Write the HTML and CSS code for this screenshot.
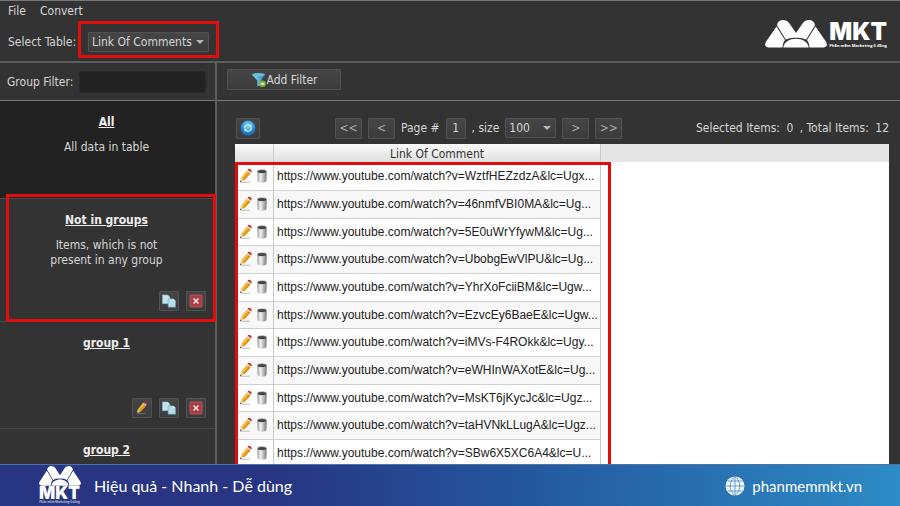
FILE: index.html
```html
<!DOCTYPE html>
<html lang="en">
<head>
<meta charset="utf-8">
<meta name="viewport" content="width=device-width, initial-scale=1">
<title>Link Of Comments</title>
<link rel="stylesheet" href="styles.css">
</head>
<body>
<svg class="defs" aria-hidden="true">
  <defs>
    <linearGradient id="can" x1="0" x2="1"><stop offset="0" stop-color="#9a9a9a"/><stop offset=".35" stop-color="#f2f2f2"/><stop offset="1" stop-color="#777"/></linearGradient>
    <linearGradient id="funnel" x1="0" x2="1"><stop offset="0" stop-color="#9bdcf8"/><stop offset="1" stop-color="#2787be"/></linearGradient>
    <radialGradient id="ball" cy=".35"><stop offset="0" stop-color="#8fd6fb"/><stop offset=".6" stop-color="#43aaea"/><stop offset="1" stop-color="#1d74bd"/></radialGradient>
    <symbol id="pencil" viewBox="0 0 14 16">
      <path d="M1.500 14.300h9.500" stroke="#999" stroke-opacity=".45" stroke-width="1.400"/>
      <path d="M1 14.300l1-4.300L5.200 12.300z" fill="#e8c9a0"/>
      <path d="M1 14.300l.4-1.800 1.200 1z" fill="#333"/>
      <path d="M2 10L7.700 2.700l3.800 2.700L5.200 12.300z" fill="#f6b93a"/>
      <path d="M3.800 11.200L9.700 4l1.800 1.400L5.200 12.300z" fill="#dc951d"/>
      <path d="M7.700 2.700l.8-1 3.800 2.700-.8 1z" fill="#ddd"/>
      <path d="M8.500 1.700C9.200.6 10.300.5 11.500 1.300s1.500 2 .8 3.100z" fill="#c5322b"/>
    </symbol>
    <symbol id="trash" viewBox="0 0 12 16">
      <path d="M1.200 3.500l.4 9.500c.2 2.200 8.600 2.200 8.800 0l.4-9.500z" fill="url(#can)"/>
      <ellipse cx="6" cy="3.300" rx="4.900" ry="2" fill="#b0b0b0"/>
      <ellipse cx="6" cy="3.500" rx="4.200" ry="1.500" fill="#444"/>
    </symbol>
    <symbol id="copy" viewBox="0 0 16 16">
      <path d="M.5 1h6L9 3.500V11H.5z" fill="#c3e4ee" stroke="#85b8cb" stroke-width=".6"/>
      <path d="M7 5.500h5.500L15.500 8v7H7z" fill="#b5deeb" stroke="#5d9db6" stroke-width=".6"/>
      <path d="M12.500 5.500V8h3z" fill="#f2fbff"/>
    </symbol>
    <symbol id="remove" viewBox="0 0 14 14">
      <rect x="1" y="1" width="12" height="12" rx="1" fill="#a93c42" stroke="#c75c60" stroke-width=".8"/>
      <path d="M4.500 4.500l5 5m0-5l-5 5" stroke="#f0dede" stroke-width="1.700"/>
    </symbol>
    <symbol id="filter" viewBox="0 0 16 16">
      <path d="M1 2.500L6.300 8.500v6l3.700-1.600V8.500L14 2.500z" fill="url(#funnel)"/>
      <ellipse cx="7.500" cy="2.600" rx="6.500" ry="1.700" fill="#6cbde3"/>
      <circle cx="11.500" cy="11.800" r="3.300" fill="#77b932"/>
      <path d="M9.700 11.800h3.600" stroke="#fff" stroke-width="1.400"/>
    </symbol>
    <symbol id="refresh" viewBox="0 0 16 16">
      <circle cx="8" cy="8" r="7.500" fill="url(#ball)"/>
      <path d="M4.600 8.300A3.400 3.400 0 0 1 10.400 5.700M11.400 7.700A3.400 3.400 0 0 1 5.600 10.300" fill="none" stroke="#c6ebff" stroke-width="1.300"/>
      <path d="M11.600 4.300v2.900H8.700zM4.400 11.700V8.800h2.900z" fill="#c6ebff"/>
    </symbol>
    <symbol id="globe" viewBox="0 0 20 20">
      <circle cx="10" cy="10" r="9.500" fill="#f4faff"/>
      <path d="M10 .5v19M.5 10h19M2.500 5h15M2.500 15h15M10 .5C3.500 6 3.500 14 10 19.500C16.500 14 16.500 6 10 .5" fill="none" stroke="#4588bd" stroke-width=".8"/>
    </symbol>
    <symbol id="flower" viewBox="0 0 62 28" preserveAspectRatio="none">
      <g fill="#fff">
        <path d="M11.500 6.500L20 20Q17.600 22.800 17.300 27.500H4Q-1.500 27 .8 22z"/>
        <path d="M12 5.200C13-1 21-1.500 24.500 3.500L31 13V17.700Q25 17.300 20.800 19.600z"/>
        <path d="M50.500 6.500L42 20Q44.400 22.800 44.700 27.500H58Q63.500 27 61.200 22z"/>
        <path d="M50 5.200C49-1 41-1.500 37.500 3.500L31 13V17.700Q37 17.300 41.200 19.600z"/>
        <path d="M18.300 27.500C19.500 15.800 42.500 15.800 43.700 27.500z"/>
      </g>
    </symbol>
  </defs>
</svg>
<div class="app">
  <nav class="menu" aria-label="Main"><a href="#">File</a><a href="#">Convert</a></nav>
  <header class="toolbar">
    <label for="table">Select Table:</label>
    <span class="picker table-picker"><select id="table"><option>Link Of Comments</option></select></span>
    <div class="brand">
      <svg class="brand-mark" aria-hidden="true"><use href="#flower"/></svg>
      <div class="brand-words"><strong>MKT</strong><small>Phần mềm Marketing 0 đồng</small></div>
    </div>
  </header>
  <div class="workspace">
    <aside class="sidebar">
      <div class="group-filter"><label for="gf">Group Filter:</label><input id="gf" type="text"></div>
      <section class="group all"><h2>All</h2><p>All data in table</p></section>
      <section class="group loose"><h2>Not in groups</h2><p>Items, which is not present in any group</p>
        <div class="actions">
          <button aria-label="Copy"><svg><use href="#copy"/></svg></button>
          <button aria-label="Delete"><svg><use href="#remove"/></svg></button>
        </div>
      </section>
      <section class="group named"><h2>group 1</h2>
        <div class="actions">
          <button aria-label="Edit"><svg><use href="#pencil"/></svg></button>
          <button aria-label="Copy"><svg><use href="#copy"/></svg></button>
          <button aria-label="Delete"><svg><use href="#remove"/></svg></button>
        </div>
      </section>
      <section class="group named"><h2>group 2</h2></section>
    </aside>
    <main class="content">
      <div class="filters"><button class="add"><svg aria-hidden="true"><use href="#filter"/></svg>Add Filter</button></div>
      <div class="pager">
        <button class="refresh" aria-label="Refresh"><svg><use href="#refresh"/></svg></button>
        <div class="pages">
          <button>&lt;&lt;</button><button>&lt;</button>
          <label for="page">Page #</label><input id="page" type="text" value="1">
          <label for="size">, size</label><span class="picker size-picker"><select id="size"><option>100</option></select></span>
          <button>&gt;</button><button>&gt;&gt;</button>
        </div>
        <div class="counts">Selected Items: <span>0</span> , Total Items: <span>12</span></div>
      </div>
      <div class="sheet">
        <table>
          <thead><tr><th class="tools"></th><th class="link">Link Of Comment</th></tr></thead>
          <tbody id="rows"></tbody>
        </table>
      </div>
    </main>
  </div>
  <footer class="banner">
    <div class="stamp"><svg aria-hidden="true"><use href="#flower"/></svg><strong>MKT</strong><small>Phần mềm Marketing 0 đồng</small></div>
    <p class="slogan">Hiệu quả - Nhanh - Dễ dùng</p>
    <a class="site" href="#"><svg aria-hidden="true"><use href="#globe"/></svg>phanmemmkt.vn</a>
  </footer>
</div>
<script src="rows.js"></script>
</body>
</html>
```
FILE: rows.js
```js
const links = [
  "WztfHEZzdzA&lc=Ugx...",
  "46nmfVBI0MA&lc=Ug...",
  "5E0uWrYfywM&lc=Ug...",
  "UbobgEwVlPU&lc=Ug...",
  "YhrXoFciiBM&lc=Ugw...",
  "EzvcEy6BaeE&lc=Ugw...",
  "iMVs-F4ROkk&lc=Ugy...",
  "eWHInWAXotE&lc=Ug...",
  "MsKT6jKycJc&lc=Ugz...",
  "taHVNkLLugA&lc=Ugz...",
  "SBw6X5XC6A4&lc=U..."
];
const body = document.getElementById("rows");
for (const link of links) {
  const row = body.insertRow();
  const tools = row.insertCell();
  tools.className = "tools";
  tools.innerHTML = '<div class="row-tools"><button aria-label="Edit"><svg><use href="#pencil"/></svg></button><button aria-label="Delete"><svg><use href="#trash"/></svg></button></div>';
  row.insertCell().textContent = "https://www.youtube.com/watch?v=" + link;
}
```
FILE: styles.css
```css
*, *::before, *::after { box-sizing: border-box; }
body { margin: 0; background: #333; color: #d6d6d6; font: 12px/16px "DejaVu Sans Condensed", "DejaVu Sans", sans-serif; }
button, input, select { font: inherit; color: inherit; margin: 0; padding: 0; }
a { color: inherit; text-decoration: none; }
h2, p { margin: 0; }
.defs { position: absolute; width: 0; height: 0; }
.app { display: flex; flex-direction: column; height: 100vh; overflow: hidden; }

.menu { display: flex; gap: 14px; padding: 2px 8px 0; height: 22px; border-top: 1px solid #777; }
.toolbar { position: relative; display: flex; align-items: center; gap: 10px; height: 41px; padding-left: 8px; border-bottom: 2px solid #5c5c5c; }
.toolbar label { width: 70px; white-space: nowrap; }
.picker { position: relative; display: flex; }
.picker::after { content: ""; position: absolute; right: 5px; top: 8px; border: 4px solid transparent; border-top-color: #b5b5b5; border-bottom: 0; pointer-events: none; }
.picker select, .pages button, .pages input, .refresh, .add, .actions button {
  appearance: none; border: 1px solid #525252; background: linear-gradient(#454545, #3c3c3c); border-radius: 1px; outline: 0;
}
.picker select { width: 100%; height: 20px; padding-left: 3px; }
.table-picker { width: 121px; }
.table-picker::before { content: ""; position: absolute; inset: -11px -10px -6px -10px; border: 3px solid #e30c0c; pointer-events: none; }
.brand { position: absolute; right: 13px; bottom: 12px; display: flex; align-items: flex-end; gap: 2px; color: #fff; }
.brand-mark { width: 62px; height: 28px; margin-bottom: 1px; }
.brand-words { display: flex; flex-direction: column; }
.brand strong { font: 900 24px/22px Inter, sans-serif; }
.brand small { font: 700 4px/6px "Open Sans", sans-serif; white-space: nowrap; }

.workspace { flex: 1; min-height: 0; display: flex; overflow: hidden; }
.sidebar { flex: 0 0 217px; min-width: 0; border-right: 2px solid #5c5c5c; }
.group-filter { display: flex; align-items: center; gap: 6px; height: 38px; padding: 0 9px 0 7px; border-bottom: 1px solid #777; }
.group-filter label { white-space: nowrap; }
.group-filter input { flex: 1; min-width: 0; height: 22px; background: #222; border: 1px solid #2a2a2a; border-radius: 3px; }
.group { position: relative; display: flex; flex-direction: column; align-items: center; text-align: center; padding: 13px 45px 0 43px; border-bottom: 1px solid #484848; }
.group h2 { font-size: 12px; line-height: 16px; font-weight: 700; text-decoration: underline; color: #eee; }
.group p { margin-top: 10px; line-height: 15px; }
.all { height: 98px; background: #222; }
.loose { height: 123px; }
.loose::after { content: ""; position: absolute; inset: -5px -1px -1px 6px; border: 3px solid #e30c0c; z-index: 1; pointer-events: none; }
.named { height: 107px; }
.actions { position: absolute; right: 9px; bottom: 10px; display: flex; gap: 7px; }
.actions button { display: grid; place-items: center; width: 20px; height: 20px; }
.actions svg { width: 14px; height: 14px; }

.content { flex: 1; min-width: 0; display: flex; flex-direction: column; }
.filters { height: 38px; padding: 6px 10px 0; border-bottom: 1px solid #777; }
.add { display: flex; align-items: center; justify-content: center; width: 114px; height: 21px; }
.add svg { width: 16px; height: 16px; }
.pager { display: flex; align-items: center; height: 43px; padding: 11px 11px 0 19px; }
.pager button { height: 21px; }
.refresh { display: grid; place-items: center; width: 24px; }
.refresh svg { width: 16px; height: 16px; }
.pages { display: flex; align-items: center; gap: 6px; margin-left: 75px; white-space: nowrap; }
.pages button { width: 27px; color: #aaa; }
.pages input { width: 20px; height: 21px; text-align: center; }
.size-picker { width: 51px; }
.counts { margin-left: auto; white-space: nowrap; }
.counts span { margin: 0 3px; }
.counts span:last-child { margin-right: 0; }

.sheet { position: relative; flex: 1; min-height: 0; margin: 0 11px 0 18px; background: linear-gradient(#e5e5e5 0 18px, #fff 18px); overflow: hidden; }
.sheet::after { content: ""; position: absolute; left: 0; top: 18px; bottom: -3px; width: 376px; border: 3px solid #e30c0c; pointer-events: none; }
table { width: 366px; table-layout: fixed; border-collapse: separate; border-spacing: 0; color: #222; }
th { height: 19px; padding: 0; line-height: 18px; font-weight: 400; background: linear-gradient(#fafafa, #dedede); border-right: 1px solid #ccc; color: #333; }
.tools { width: 39px; }
td { height: 28px; padding: 0 0 1px 3px; border-right: 1px solid #c8c8c8; border-bottom: 1px solid #d0d0d0; font: 12px/16px "Liberation Sans", Arial, sans-serif; white-space: nowrap; background: #fff; }
tr:nth-child(3n) td { height: 27px; }
tr:nth-child(even) td { background: #f8f8f8; }
.row-tools { display: flex; gap: 2px; padding-left: 1px; }
.row-tools button { display: flex; border: 0; background: none; }
.row-tools svg { width: 14px; height: 16px; }

.banner { flex: 0 0 42px; display: flex; align-items: center; padding: 0 38px; color: #fff; background: linear-gradient(90deg, #283583 30%, #24579d 58%, #2d8bc6); border-top: 1px solid #4d72a8; }
.stamp { display: flex; flex-direction: column; align-items: center; width: 43px; }
.stamp svg { width: 42px; height: 20px; }
.stamp strong { font: 900 17px/14px Inter, sans-serif; }
.stamp small { font: 3px/5px "Open Sans", sans-serif; white-space: nowrap; }
.slogan { margin-left: 13px; font: 16px/22px Lato, sans-serif; }
.site { display: flex; align-items: center; gap: 7px; margin-left: auto; font: 15px/22px Lato, sans-serif; }
.site svg { width: 20px; height: 20px; }
```
